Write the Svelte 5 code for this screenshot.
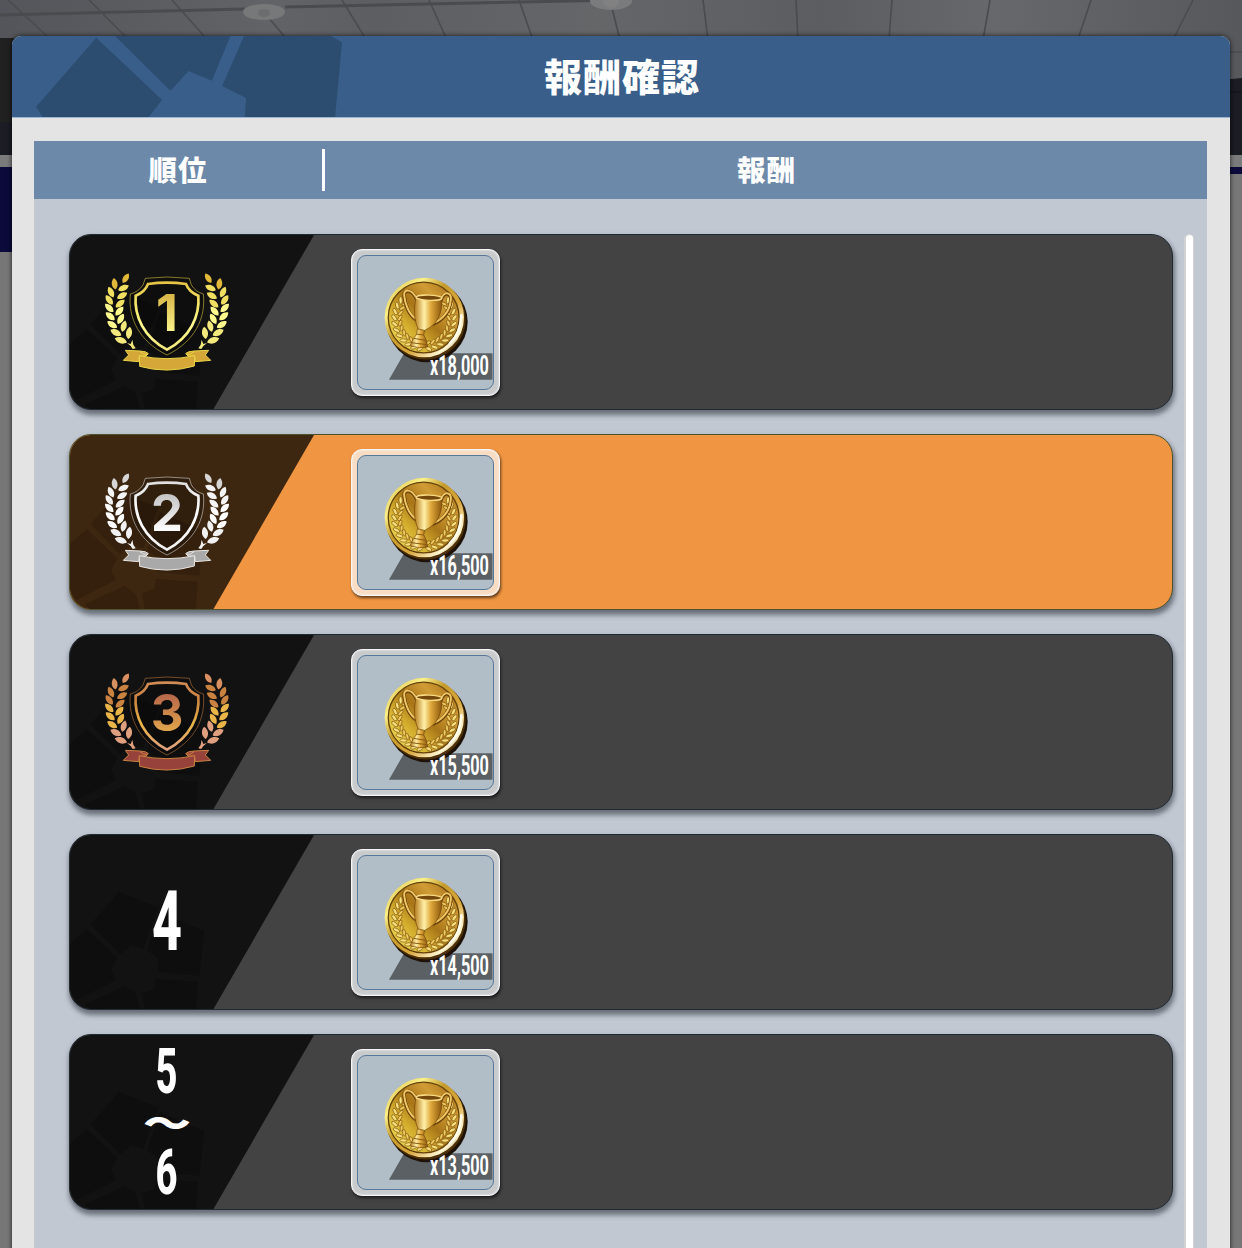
<script lang="ts">
	interface Reward {
		rank: string[];
		medal?: 'gold' | 'silver' | 'bronze';
		amount: string;
		current?: boolean;
	}

	const rewards: Reward[] = [
		{ rank: ['1'], medal: 'gold', amount: 'x18,000' },
		{ rank: ['2'], medal: 'silver', amount: 'x16,500', current: true },
		{ rank: ['3'], medal: 'bronze', amount: 'x15,500' },
		{ rank: ['4'], amount: 'x14,500' },
		{ rank: ['5', '6'], amount: 'x13,500' }
	];

	// gradient stops from top to bottom, then the ribbon fill and its edge
	const medals = {
		gold: { stops: ['#e2b83a', '#f0df60', '#fdf98c', '#f2e87c'], number: ['#d9b648', '#fbf38a'], ribbon: '#d5a739', edge: '#e9d548' },
		silver: { stops: ['#d6d6d6', '#f4f4f4', '#ffffff', '#f1f1f1'], number: ['#c4c4c4', '#ffffff'], ribbon: '#a9a9a9', edge: '#e9e6e2' },
		bronze: { stops: ['#d89060', '#c98240', '#e9b548', '#e0a080'], number: ['#b8674a', '#e0a54c'], ribbon: '#97423a', edge: '#c98242' }
	};

	// x, y, rotation, scale of each leaf on the left branch
	const leaves = [
		[197, 161, 32, 0.95],
		[164, 178, -8, 1],
		[190, 190, 66, 1],
		[153, 203, -24, 1],
		[186, 213, 60, 1],
		[148, 226, -36, 1],
		[180, 237, 50, 1],
		[148, 250, -45, 1],
		[178, 260, 42, 1],
		[151, 275, -50, 1],
		[182, 283, 30, 1],
		[157, 300, -57, 1],
		[191, 305, 16, 1],
		[168, 324, -62, 1.05],
		[207, 325, 8, 1.05],
		[183, 347, -72, 1.1]
	];

	// laurel around the cup on the coin
	const coinLeaves = Array.from({ length: 11 }, (_, i) => {
		const deg = 98 + i * 12;
		const a = (deg * Math.PI) / 180;
		return {
			x: 253 + Math.cos(a) * 91,
			y: 235 + Math.sin(a) * 91,
			x2: 253 + Math.cos(a) * 74,
			y2: 235 + Math.sin(a) * 74,
			deg
		};
	});
</script>

<div class="scene">
	<svg class="backdrop" viewBox="0 0 1242 1248" aria-hidden="true">
		<defs>
			<linearGradient id="ceiling">
				<stop offset="0" stop-color="#54555a" />
				<stop offset="0.22" stop-color="#626367" />
				<stop offset="0.3" stop-color="#5d5e62" />
				<stop offset="0.48" stop-color="#656668" />
				<stop offset="0.66" stop-color="#5b5d61" />
				<stop offset="0.8" stop-color="#67686b" />
				<stop offset="1" stop-color="#57585c" />
			</linearGradient>
		</defs>
		<rect width="1242" height="1248" fill="#777" />
		<rect width="1242" height="80" fill="url(#ceiling)" />
		<g stroke="#4a4b4f" stroke-width="1.6" fill="none">
			<path d="M0 15 L245 9 M285 7 L620 0" stroke-width="3" />
			<path d="M8 0 L47 36 M89 0 L125 36 M172 0 L204 36 M264 12 L284 36 M342 0 L364 36 M429 0 L447 40 M519 0 L533 40 M612 8 L620 40 M703 0 L708 40 M796 0 L798 40 M892 0 L889 40 M990 0 L983 40 M1091 0 L1079 36 M1193 0 L1175 36 M1228 52 H1242" />
		</g>
		<ellipse cx="264" cy="12" rx="21" ry="8" fill="#77787a" />
		<ellipse cx="264" cy="13" rx="6" ry="4" fill="#6d6d6f" />
		<ellipse cx="611" cy="1" rx="21" ry="9" fill="#7a7b7c" />
		<ellipse cx="611" cy="2" rx="8" ry="6" fill="#818181" />
		<path d="M0 38 H40 V122 H0Z" fill="#202020" />
		<path d="M0 122 H40 V155 H0Z M1200 82 L1242 78 V155 H1200Z" fill="#1b1c24" />
		<path d="M1200 92 H1242" stroke="#111219" />
		<path d="M0 155 H40 V167 H0Z M1200 155 H1242 V167 H1200Z" fill="#7b7b7b" />
		<path d="M0 167 H40 V252 H0Z M1200 167 H1242 V174 H1200Z" fill="#0b0a3b" />
	</svg>

	<div class="dialog">
		<header class="title-bar">
			<svg class="emblem" viewBox="36 108 1000 246" aria-hidden="true">
				<path d="M289 113 L487 300 L444 354 H130 L108 321Z M345 108 H692 L636 242 L566 213 L512 272Z M733 108 H993 L1027 127 L1006 354 H735 L739 294 L667 258Z" />
			</svg>
			<h1>報酬確認</h1>
		</header>

		<div class="panel">
			<div class="columns">
				<span class="col-rank">順位</span>
				<span class="col-reward">報酬</span>
			</div>

			<div class="body">
				<ul class="rewards">
					{#each rewards as reward}
						<li class="reward" class:current={reward.current}>
							<div class="rank">
								<svg class="rank-emblem" viewBox="30 30 732 522" aria-hidden="true">
									<path d="M92 298 L178 200 L295 248 L250 370 L215 360 L180 388Z M300 262 L432 318 L418 452 L293 440 L295 400 L262 376Z M288 462 L413 470 L408 553 H255 L246 505 L283 492Z M195 482 L228 508 L240 553 H90 L75 538Z M80 312 L172 400 L153 435 L168 465 L50 525 L20 480 V365Z" />
								</svg>

								{#if reward.medal}
									{@const medal = medals[reward.medal]}
									<svg class="medal" viewBox="120 130 402 330">
										<defs>
											<linearGradient id="{reward.medal}-metal" gradientUnits="userSpaceOnUse" x1="0" y1="150" x2="0" y2="375">
												{#each medal.stops as stop, i}
													<stop offset={i / 3} stop-color={stop} />
												{/each}
											</linearGradient>
											<linearGradient id="{reward.medal}-number" gradientUnits="userSpaceOnUse" x1="0" y1="210" x2="0" y2="320">
												<stop offset="0" stop-color={medal.number[0]} />
												<stop offset="1" stop-color={medal.number[1]} />
											</linearGradient>
										</defs>
										{#each ['', 'translate(642 0) scale(-1 1)'] as side}
											<g transform={side}>
												{#each leaves as [x, y, rot, scale]}
													<path
														d="M0 -18 C12 -8 11 9 0 17 C-11 9 -12 -8 0 -18Z"
														transform="translate({x} {y}) rotate({rot}) scale({scale})"
														fill={medal.stops[Math.min(3, Math.round((y - 150) / 62))]}
													/>
												{/each}
												<path d="M201 355 L212 358 L217 345 L220 360 L227 371 L218 373 L212 364Z" fill={medal.stops[3]} />
												<path
													d="M196 377 L240 379 Q260 380 265 387 L258 394 L238 395 L236 411 L190 407 L206 391Z"
													fill={medal.ribbon}
													stroke={medal.edge}
													stroke-width="3"
												/>
												<path d="M240 381 Q250 391 262 389" fill="none" stroke={medal.edge} stroke-width="3" />
											</g>
										{/each}
										<path
											d="M256 161 Q321 153 388 161 L394 181 Q407 202 430 208 C438 280 405 350 321 391 C237 350 204 280 211 208 Q235 202 249 181Z"
											fill="#0003"
											stroke={medal.edge}
											stroke-opacity="0.65"
											stroke-width="2.5"
										/>
										<path
											d="M264 178 Q321 170 378 178 Q387 202 415 213 C420 275 390 338 321 375 C252 338 222 275 227 213 Q255 202 264 178Z"
											fill="none"
											stroke="url(#{reward.medal}-metal)"
											stroke-width="8"
										/>
										<path
											d="M238 393 Q321 411 404 393 L403 424 Q321 448 239 425Z"
											fill={medal.ribbon}
											stroke={medal.edge}
											stroke-width="3"
										/>
										<text class="medal-number" x="321" y="320" fill="url(#{reward.medal}-number)">{reward.rank[0]}</text>
									</svg>
								{:else if reward.rank.length === 1}
									<svg class="rank-number" viewBox="0 0 196 176">
										<text x="83" y="116" font-size="84" textLength="30" lengthAdjust="spacingAndGlyphs">{reward.rank[0]}</text>
									</svg>
								{:else}
									<svg class="rank-number" viewBox="0 0 196 176">
										<text x="86.5" y="59" font-size="63" textLength="22" lengthAdjust="spacingAndGlyphs">{reward.rank[0]}</text>
										<text class="tilde" transform="translate(74 103) scale(1 0.75)" font-size="48">〜</text>
										<text x="86.5" y="160" font-size="63" textLength="22" lengthAdjust="spacingAndGlyphs">{reward.rank[1]}</text>
									</svg>
								{/if}
							</div>

							<div class="item">
								<svg class="item-face" viewBox="54 45 405 402">
									<defs>
										<linearGradient id="rim" x1="0" y1="0" x2="1" y2="1">
											<stop offset="0" stop-color="#d5b83a" />
											<stop offset="0.25" stop-color="#fbf08a" />
											<stop offset="0.42" stop-color="#c49a2c" />
											<stop offset="0.62" stop-color="#d9a63a" />
											<stop offset="0.82" stop-color="#fff7d2" />
											<stop offset="1" stop-color="#6b4308" />
										</linearGradient>
										<linearGradient id="face" x1="0.95" y1="0.1" x2="0.1" y2="0.9">
											<stop offset="0" stop-color="#a8711a" />
											<stop offset="0.25" stop-color="#d09c35" />
											<stop offset="0.5" stop-color="#a87518" />
											<stop offset="0.72" stop-color="#d3ad2d" />
											<stop offset="1" stop-color="#eedb54" />
										</linearGradient>
										<linearGradient id="cup">
											<stop offset="0" stop-color="#b67b1c" />
											<stop offset="0.35" stop-color="#fff0a8" />
											<stop offset="0.6" stop-color="#dfa83a" />
											<stop offset="1" stop-color="#8a560d" />
										</linearGradient>
									</defs>
									<path d="M192 339 H459 V419 H146Z" fill="#5a6063" />
									<circle cx="262" cy="244" r="122" fill="#1d1205" />
									<circle cx="257" cy="237" r="121" fill="#4d3007" />
									<circle cx="253" cy="231" r="120" fill="url(#rim)" />
									<circle cx="251" cy="231" r="107" fill="url(#face)" stroke="#66430b" stroke-width="4" />
									{#each ['', 'translate(506 0) scale(-1 1)'] as side}
										<g transform={side}>
											{#each coinLeaves as leaf}
												<ellipse cx={leaf.x} cy={leaf.y} rx="11" ry="5" fill="#f7e07c" stroke="#80550f" stroke-width="2" transform="rotate({leaf.deg + 50} {leaf.x} {leaf.y})" />
												<ellipse cx={leaf.x2} cy={leaf.y2} rx="10" ry="4.5" fill="#edc95e" stroke="#80550f" stroke-width="2" transform="rotate({leaf.deg + 120} {leaf.x2} {leaf.y2})" />
											{/each}
										</g>
									{/each}
									<g fill="none" stroke-linecap="round">
										<path d="M229 175 C214 143 190 148 192 165 C194 192 207 224 229 238 M303 178 C314 150 335 158 333 178 C331 214 307 240 280 250" stroke="#6c430a" stroke-width="11" />
										<path d="M229 173 C214 141 190 146 192 163 C194 190 207 222 229 236 M303 176 C314 148 335 156 333 176 C331 212 307 238 280 248" stroke="#efc663" stroke-width="6" />
									</g>
									<path d="M228 168 Q264 182 306 171 C308 215 294 252 257 268 L246 276 L234 264 C221 240 221 200 228 168Z" fill="url(#cup)" stroke="#70460a" stroke-width="2" />
									<ellipse cx="267" cy="171" rx="39" ry="8" fill="#74470b" stroke="#f9dc86" stroke-width="4" transform="rotate(2 267 171)" />
									<path d="M232 265 L254 270 L251 283 L259 300 L263 320 Q239 327 210 316 L220 294 L230 282Z" fill="url(#cup)" stroke="#70460a" stroke-width="2" />
									<path d="M230 281 L252 284 M221 294 L257 300 M214 307 L260 313" stroke="#8a5a12" stroke-width="3" />
									<path d="M330 309 Q363 278 365 224" fill="none" stroke="#fffce8" stroke-width="8" stroke-linecap="round" />
									<text class="amount" transform="translate(270 405) scale(0.58 1)" textLength="307" lengthAdjust="spacingAndGlyphs">{reward.amount}</text>
								</svg>
							</div>
						</li>
					{/each}
				</ul>
				<div class="scroll-track"><div class="scroll-thumb"></div></div>
			</div>
		</div>
	</div>
</div>

<style>
	:global(body) {
		margin: 0;
		overflow: hidden;
	}

	.scene {
		display: grid;
		width: 1242px;
		height: 1248px;
		overflow: hidden;
		font-family: 'Noto Sans CJK JP', sans-serif;
		color: #fff;
	}

	.backdrop,
	.dialog {
		grid-area: 1 / 1;
	}

	.dialog {
		margin: 36px 12px 0;
		height: 1240px;
		border-radius: 9px 9px 0 0;
		background: #e4e4e4;
		box-shadow: 0 0 5px rgba(0, 0, 0, 0.75);
		z-index: 1;
	}

	.title-bar {
		display: grid;
		height: 81px;
		border-bottom: 1px solid #9db6cf;
		border-radius: 9px 9px 0 0;
		background: #385e89;
		overflow: hidden;
	}

	.emblem {
		grid-area: 1 / 1;
		width: 333px;
		height: 82px;
		fill: #2c4d70;
	}

	h1 {
		grid-area: 1 / 1;
		place-self: start center;
		margin: 0 0 0 2px;
		font-size: 38px;
		line-height: 78px;
		font-weight: 900;
		letter-spacing: 1px;
	}

	/* ── Table ── */
	.panel {
		margin: 23px 23px 0 22px;
		height: 1110px;
		background: #c1c8d2;
	}

	.columns {
		display: grid;
		grid-template-columns: 291px 1fr;
		align-items: center;
		height: 58px;
		background: #6c89a9;
		font-size: 28.5px;
		line-height: 40px;
		font-weight: 900;
		letter-spacing: 1px;
		text-align: center;
	}

	.col-rank {
		height: 42px;
		border-right: 3px solid #fff;
	}

	.col-reward {
		height: 42px;
		padding-left: 1px;
	}

	.body {
		display: flex;
		padding: 35px 13px 0 35px;
	}

	.rewards {
		display: flex;
		flex-direction: column;
		gap: 24px;
		width: 1104px;
		margin: 0;
		padding: 0;
		list-style: none;
	}

	.reward {
		--row: #434343;
		--rank: #121212;
		--rank-shape: #0e0e0e;
		--edge: #202a33;
		--frame: #c9cacc;
		display: flex;
		box-sizing: border-box;
		height: 176px;
		border: 1px solid var(--edge);
		border-radius: 22px;
		background: var(--row);
		box-shadow: 1px 4px 5px 1px rgba(70, 75, 85, 0.7);
		overflow: hidden;
	}

	.reward.current {
		--row: #f09642;
		--rank: #3e2711;
		--rank-shape: #34200d;
		--edge: #4d532f;
		--frame: #f8dcc4;
	}

	.rank {
		display: grid;
		width: 244px;
		height: 174px;
		background: var(--rank);
		clip-path: polygon(0 0, 100% 0, 58.8% 100%, 0 100%);
	}

	.rank > svg {
		grid-area: 1 / 1;
	}

	.rank-emblem {
		width: 244px;
		height: 174px;
		fill: var(--rank-shape);
	}

	.medal {
		width: 134px;
		height: 110px;
		margin: 33px 0 0 30px;
	}

	.medal-number {
		font: bold 152px Inter, sans-serif;
		text-anchor: middle;
	}

	.rank-number {
		width: 196px;
		height: 176px;
		margin: -1px 0 0 -1px;
		font-family: Roboto, sans-serif;
		font-weight: 800;
		fill: #fff;
	}

	.tilde {
		font-family: 'Noto Sans CJK JP', sans-serif;
		font-weight: 900;
	}

	/* ── Item tile ── */
	.item {
		box-sizing: border-box;
		width: 149px;
		height: 147px;
		margin: 14px 0 0 37px;
		padding: 5px;
		border: 1px solid #f4f6f8;
		border-radius: 11px;
		background: var(--frame);
		box-shadow:
			inset 0 0 2px #fff,
			1px 2px 3px rgba(0, 0, 0, 0.6);
	}

	.item-face {
		display: block;
		box-sizing: border-box;
		width: 137px;
		height: 135px;
		border: 1px solid #55799a;
		border-radius: 9px;
		background: #b1bec8;
	}

	.amount {
		font-family: Roboto, sans-serif;
		font-size: 81px;
		font-weight: 700;
		fill: #fff;
	}

	/* ── Scrollbar ── */
	.scroll-track {
		box-sizing: border-box;
		width: 10px;
		height: 1060px;
		margin-left: auto;
		padding: 1px 1px 0 2px;
		border-radius: 5px 5px 0 0;
		background: #d0d2d4;
	}

	.scroll-thumb {
		height: 100%;
		border-radius: 4px 4px 0 0;
		background: #fff;
	}
</style>
